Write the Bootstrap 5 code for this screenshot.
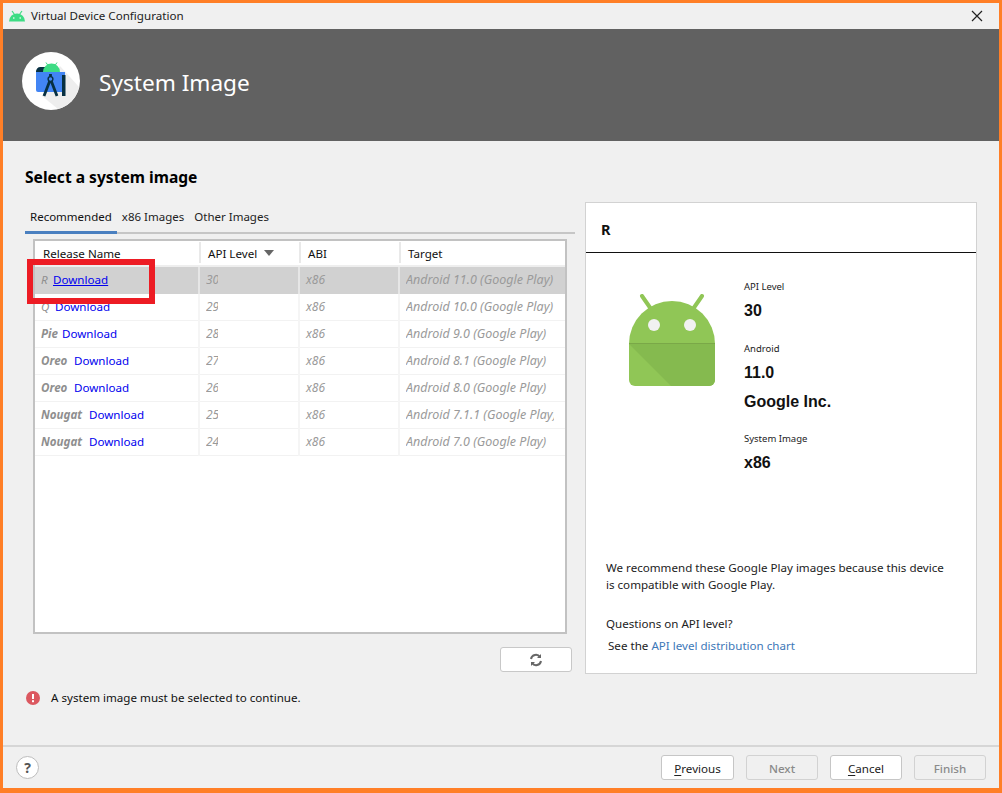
<!DOCTYPE html>
<html lang="en">
<head>
<meta charset="utf-8">
<title>Virtual Device Configuration</title>
<link href="https://cdn.jsdelivr.net/npm/bootstrap@5.3.0/dist/css/bootstrap.min.css" rel="stylesheet">
<style>
html,body{margin:0;height:100%;overflow:hidden}
body{font-family:"Noto Sans","Open Sans",sans-serif;font-size:11.6px;color:#111;background:#f0f0f0}
.win{height:793px;border:solid #ff7f27;border-width:3px 3px 5px 3px;background:#f0f0f0;display:flex;flex-direction:column;position:relative}
.tbar{height:26px;padding:0 16px 0 5px;gap:5px;color:#222}
.hdr{height:112px;background:#616161;color:#fff;padding:0 0 8px 19px;gap:19px}
.hdr h1{font-size:22.6px;font-weight:400;margin:4px 0 0;font-family:"Noto Sans",sans-serif}
.logo{width:58px;height:58px;border-radius:50%;background:#fff;flex:none}
.mainar{flex:1;padding:26px 22px 0 22px;min-height:0}
.ttl{font-size:15.6px;font-weight:700;margin:0;line-height:20px;color:#000}
.cols{gap:10px;margin-top:15px}
.lft{width:550px;flex:none}
.tabsx{border-bottom:2px solid #c6c6c6;height:30px;align-items:flex-end;gap:0;margin-top:2px}
.tabsx .nav-link{border:0;border-radius:0;color:#222;font-size:11.5px;padding:0 5px 4px;line-height:20px;margin-bottom:-2px;border-bottom:3px solid transparent;background:none}
.tabsx .nav-link.active{border-bottom-color:#4a80c0;color:#111;background:none}
.grid{margin:5px 8px 0 8px;width:534px;height:395px;border:2px solid #c2c2c2;background:#fff}
.grid table{table-layout:fixed;width:530px;margin:0;font-size:11.6px;border-collapse:collapse}
.grid th{font-weight:400;height:25px;padding:4px 0 0 9px;border:0;line-height:18px;color:#111;border-bottom:2px solid #eee;position:relative;vertical-align:top}
.grid th:first-child{padding-left:8px}
.grid th+th::before{content:"";position:absolute;left:0;top:1px;bottom:2px;width:2px;background:#e9e9e9}
.grid td{height:27px;padding:1px 0 0 6px;border:0;border-bottom:1px solid #f2f2f2;border-left:2px solid #f5f5f5;color:#9a9a9a;font-style:italic;vertical-align:middle;white-space:nowrap;overflow:hidden;line-height:20px;background:transparent}
.grid td:first-child{border-left:0;font-style:normal}
.grid tr.sel td{background:#d1d1d1;border-left-color:#e6e6e6;border-bottom-color:#d1d1d1}
.nm{display:inline-block;overflow:hidden;vertical-align:bottom;font-weight:700;font-style:italic;color:#8f8f8f;margin-right:4px}
.w-r{width:8px;font-weight:400}.w-q{width:10px;font-weight:400}.w-p{width:17px}.w-o{width:29px}.w-n{width:44px}
.api{display:inline-block;width:12px;overflow:hidden;vertical-align:bottom;font-size:12px}
.abi{font-size:12px}
.tgt{display:inline-block;width:148px;overflow:hidden;vertical-align:bottom;font-size:12.5px}
.dl{color:#0000ee;text-decoration:none}
.sel .dl{text-decoration:underline}
.sortc{display:inline-block;width:0;height:0;border:5px solid transparent;border-top:6px solid #666;border-bottom:0;margin-left:7px;vertical-align:2px}
.rbtn{width:72px;height:25px;margin:13px 3px 0 auto;display:flex;align-items:center;justify-content:center;padding:0;background:#fff;border:1px solid #c8c8c8;border-radius:3px}
.errln{margin-top:16px;gap:11px;padding-left:1px;height:20px}
.pnl{width:392px;height:472px;background:#fff;border:1px solid #d2d2d2;position:relative;display:flex;flex-direction:column;flex:none}
.pnl h2{font-size:14.5px;font-weight:700;margin:0;height:50px;line-height:52px;padding-left:15px;border-bottom:1px solid #111}
.spec{padding:0 0 0 158px;height:306px;position:relative}
.lbl{font-size:9.5px;line-height:14px;color:#222}
.val{font-family:"Liberation Sans",sans-serif;font-size:16px;font-weight:700;color:#111;line-height:20px;margin-top:7px}
.bigrob{position:absolute;left:43px;top:41px}
.sp1{padding-top:27px}.sp2{margin-top:21px}.val.sp3{margin-top:9px}.sp4{margin-top:20px}
.nt{padding:0 32px 0 20px;line-height:17px;color:#222;margin:0}
.nt2{margin-top:22px;line-height:17px}
.nt3{margin-top:5px;padding-left:22px;color:#222}
.lnk{color:#3d78b8;text-decoration:none}
.ftr{border-top:2px solid #d6d6d6;padding:0 13px;height:43px}
.helpb{width:23px;height:23px;border-radius:50%;background:#fff;border:1px solid #bdbdbd;color:#555;font-weight:700;font-size:14px;line-height:21px;padding:0;text-align:center}
.fbtn{width:72px;height:25px;padding:2px 0 0;font-size:11.6px;line-height:20px;background:#fff;border:1px solid #c6c6c6;border-radius:3px;color:#222;margin-left:12px}
.fprev{width:73px}
.fbtn.btn:disabled{background:#f0f0f0;color:#8a8a8a;border-color:#d2d2d2;opacity:1;font-weight:500}
.fbtn u{text-underline-offset:2px}
.mark-box{position:absolute;left:24px;top:256px;width:128px;height:45px;border:6px solid #ed1c24;pointer-events:none}
.closex{width:12px;height:12px}
</style>
</head>
<body>
<div class="win">
  <div class="tbar d-flex align-items-center">
    <svg width="18" height="12" viewBox="0 0 18 12"><path d="M1 11.500a8 8 0 0 1 16 0z" fill="#3ddc84"/><path d="M4 1l2.200 3M14 1l-2.200 3" stroke="#3ddc84" stroke-width="1.200"/><circle cx="5.800" cy="8" r=".8" fill="#fff"/><circle cx="12.200" cy="8" r=".8" fill="#fff"/></svg>
    <span class="flex-grow-1">Virtual Device Configuration</span>
    <svg class="closex" viewBox="0 0 12 12"><path d="M1 1l10 10M11 1L1 11" stroke="#222" stroke-width="1.200"/></svg>
  </div>
  <div class="hdr d-flex align-items-center">
    <div class="logo d-flex align-items-center justify-content-center">
      <svg width="58" height="58" viewBox="0 0 58 58">
        <path d="M38 14l19 21a29 29 0 0 1-21 22L20 44z" fill="#eeeeee"/>
        <path d="M14 20h29v20H16a2 2 0 0 1-2-2z" fill="#4285f4"/>
        <path d="M14 20a4.500 4.500 0 0 1 4.500-5H24v5z" fill="#073042"/>
        <path d="M21 20a8.500 8.500 0 0 1 17 0z" fill="#3ddc84"/>
        <path d="M24 10.500l2 3M35 10.500l-2 3" stroke="#3ddc84" stroke-width="1"/>
        <rect x="40" y="23" width="3.500" height="21" fill="#073042"/>
        <path d="M28.500 22v3M28.500 27L22 44M28.500 27L35 44" stroke="#073042" stroke-width="2.800" fill="none"/>
        <circle cx="28.500" cy="27" r="2.400" fill="#4285f4" stroke="#073042" stroke-width="1.400"/>
      </svg>
    </div>
    <h1>System Image</h1>
  </div>
  <div class="mainar">
    <h3 class="ttl">Select a system image</h3>
    <div class="cols d-flex align-items-start">
      <div class="lft">
        <ul class="nav tabsx">
          <li class="nav-item"><a class="nav-link active" href="#">Recommended</a></li>
          <li class="nav-item"><a class="nav-link" href="#">x86 Images</a></li>
          <li class="nav-item"><a class="nav-link" href="#">Other Images</a></li>
        </ul>
        <div class="grid">
          <table class="table">
            <colgroup><col style="width:164px"><col style="width:100px"><col style="width:100px"><col style="width:166px"></colgroup>
            <thead><tr><th>Release Name</th><th>API Level<span class="sortc"></span></th><th>ABI</th><th>Target</th></tr></thead>
            <tbody>
              <tr class="sel"><td><span class="nm w-r">R</span><a class="dl" href="#">Download</a></td><td><span class="api">30</span></td><td class="abi">x86</td><td><span class="tgt">Android 11.0 (Google Play)</span></td></tr>
              <tr><td><span class="nm w-q">Q</span><a class="dl" href="#">Download</a></td><td><span class="api">29</span></td><td class="abi">x86</td><td><span class="tgt">Android 10.0 (Google Play)</span></td></tr>
              <tr><td><span class="nm w-p">Pie</span><a class="dl" href="#">Download</a></td><td><span class="api">28</span></td><td class="abi">x86</td><td><span class="tgt">Android 9.0 (Google Play)</span></td></tr>
              <tr><td><span class="nm w-o">Oreo</span><a class="dl" href="#">Download</a></td><td><span class="api">27</span></td><td class="abi">x86</td><td><span class="tgt">Android 8.1 (Google Play)</span></td></tr>
              <tr><td><span class="nm w-o">Oreo</span><a class="dl" href="#">Download</a></td><td><span class="api">26</span></td><td class="abi">x86</td><td><span class="tgt">Android 8.0 (Google Play)</span></td></tr>
              <tr><td><span class="nm w-n">Nougat</span><a class="dl" href="#">Download</a></td><td><span class="api">25</span></td><td class="abi">x86</td><td><span class="tgt">Android 7.1.1 (Google Play)</span></td></tr>
              <tr><td><span class="nm w-n">Nougat</span><a class="dl" href="#">Download</a></td><td><span class="api">24</span></td><td class="abi">x86</td><td><span class="tgt">Android 7.0 (Google Play)</span></td></tr>
            </tbody>
          </table>
        </div>
        <button class="btn rbtn" type="button" aria-label="Refresh">
          <svg width="14" height="14" viewBox="0 0 14 14" fill="none" stroke="#666" stroke-width="2"><path d="M2 6a5 5 0 0 1 9-2"/><path d="M12 8a5 5 0 0 1-9 2"/><path d="M12 1v4H8M2 13V9h4" fill="#666" stroke="none"/></svg>
        </button>
        <div class="errln d-flex align-items-center">
          <svg width="14" height="14" viewBox="0 0 14 14"><circle cx="7" cy="7" r="7" fill="#db5860"/><rect x="6" y="3" width="2" height="5" fill="#fff"/><rect x="6" y="9.200" width="2" height="2" fill="#fff"/></svg>
          <span>A system image must be selected to continue.</span>
        </div>
      </div>
      <div class="pnl">
        <h2>R</h2>
        <div class="spec">
          <svg class="bigrob" width="86" height="94" viewBox="0 0 86 94">
            <path d="M13 2l9 13M73 2L64 15" stroke="#90c656" stroke-width="4" stroke-linecap="round"/>
            <path d="M0 50a43 43 0 0 1 86 0v36a6 6 0 0 1-6 6H6a6 6 0 0 1-6-6z" fill="#90c656"/>
            <path d="M0 50h86v36a6 6 0 0 1-6 6H42z" fill="#85ba4f"/>
            <rect y="49" width="86" height="1" fill="#7aa848"/>
            <circle cx="25" cy="31" r="6" fill="#f1f1f1"/><circle cx="61" cy="31" r="6" fill="#f1f1f1"/>
          </svg>
          <div class="sp1 lbl">API Level</div>
          <div class="val">30</div>
          <div class="sp2 lbl">Android</div>
          <div class="val">11.0</div>
          <div class="val sp3">Google Inc.</div>
          <div class="sp4 lbl">System Image</div>
          <div class="val">x86</div>
        </div>
        <p class="nt">We recommend these Google Play images because this device is compatible with Google Play.</p>
        <p class="nt nt2">Questions on API level?</p>
        <div class="nt3">See the <a class="lnk" href="#">API level distribution chart</a></div>
      </div>
    </div>
  </div>
  <div class="ftr d-flex align-items-center">
    <button class="btn helpb" type="button">?</button>
    <div class="ms-auto d-flex">
      <button class="btn fbtn fprev" type="button"><u>P</u>revious</button>
      <button class="btn fbtn" type="button" disabled>Next</button>
      <button class="btn fbtn" type="button"><u>C</u>ancel</button>
      <button class="btn fbtn" type="button" disabled>Finish</button>
    </div>
  </div>
  <div class="mark-box"></div>
</div>
<script src="https://cdn.jsdelivr.net/npm/bootstrap@5.3.0/dist/js/bootstrap.bundle.min.js"></script>
</body>
</html>
